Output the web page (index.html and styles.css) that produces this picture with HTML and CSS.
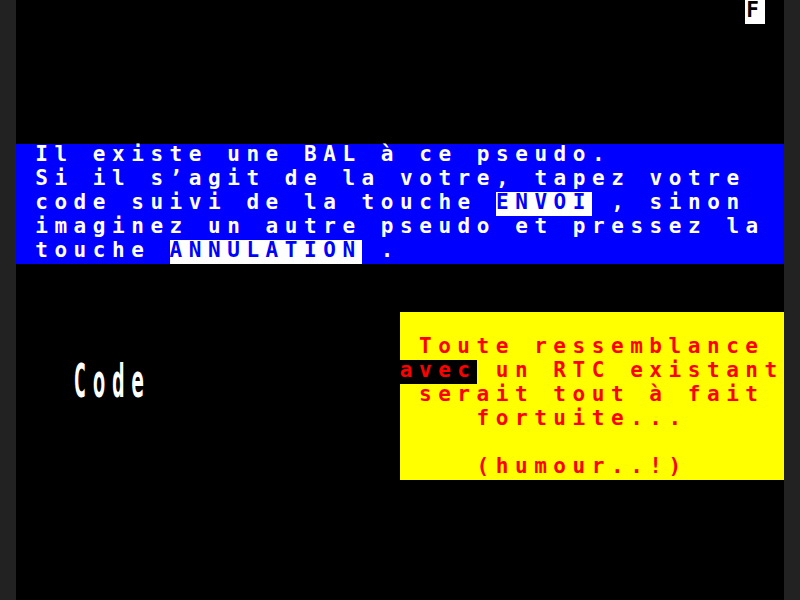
FILE: index.html
```html
<!DOCTYPE html>
<html lang="fr">
<head>
<meta charset="utf-8">
<title>Minitel</title>
<link rel="stylesheet" href="styles.css">
</head>
<body>
<div class="screen">
  <div class="status"><span class="inv-black">F</span></div>

  <div class="band-blue">
    <div class="line"> Il existe une BAL à ce pseudo.</div>
    <div class="line"> Si il s’agit de la votre, tapez votre</div>
    <div class="line"> code suivi de la touche <span class="inv-blue">ENVOI</span> , sinon</div>
    <div class="line"> imaginez un autre pseudo et pressez la</div>
    <div class="line"> touche <span class="inv-blue">ANNULATION</span> .</div>
  </div>

  <div class="label-code"><span class="dbl">Code</span></div>

  <div class="box-yellow">
    <div class="line"></div>
    <div class="line"> Toute ressemblance</div>
    <div class="line"><span class="inv-red">avec</span> un RTC existant</div>
    <div class="line"> serait tout à fait</div>
    <div class="line">    fortuite...</div>
    <div class="line"></div>
    <div class="line">    (humour..!)</div>
  </div>
</div>
</body>
</html>
```

FILE: styles.css
```css
html, body {
  margin: 0;
  padding: 0;
  background: #222222;
  width: 800px;
  height: 600px;
  overflow: hidden;
}

.screen {
  margin-left: 16px;
  width: 768px;
  height: 600px;
  background: #000000;
  display: grid;
  grid-template-columns: repeat(40, 19.2px);
  grid-template-rows: repeat(25, 24px);
  font-family: "DejaVu Sans Mono", "Liberation Mono", monospace;
  font-size: 21px;
  font-weight: bold;
  letter-spacing: calc(19.2px - 1ch);
  color: #ffffff;
}

.line {
  height: 24px;
  line-height: 21px;
  white-space: pre;
}

.status {
  grid-row: 1;
  grid-column: 39 / 41;
  display: flex;
  align-items: flex-start;
}

.inv-black {
  display: block;
  width: 20px;
  height: 24px;
  padding-left: 1px;
  box-sizing: border-box;
  line-height: 21px;
  letter-spacing: 0;
  background: #ffffff;
  color: #000000;
}

.band-blue {
  grid-row: 7 / 12;
  grid-column: 1 / -1;
  background: #0000ff;
  color: #ffffff;
}

.inv-blue {
  display: inline-block;
  height: 24px;
  background: #ffffff;
  color: #0000ff;
}

.label-code {
  grid-row: 16 / 18;
  grid-column: 4 / 9;
  line-height: 21px;
  white-space: pre;
}

.dbl {
  display: inline-block;
  transform: scaleY(2.2);
  transform-origin: 0 0;
  color: #ffffff;
}

.box-yellow {
  grid-row: 14 / 21;
  grid-column: 21 / 41;
  background: #ffff00;
  color: #ff0000;
}

.inv-red {
  display: inline-block;
  height: 24px;
  background: #000000;
  color: #ff0000;
}
```
